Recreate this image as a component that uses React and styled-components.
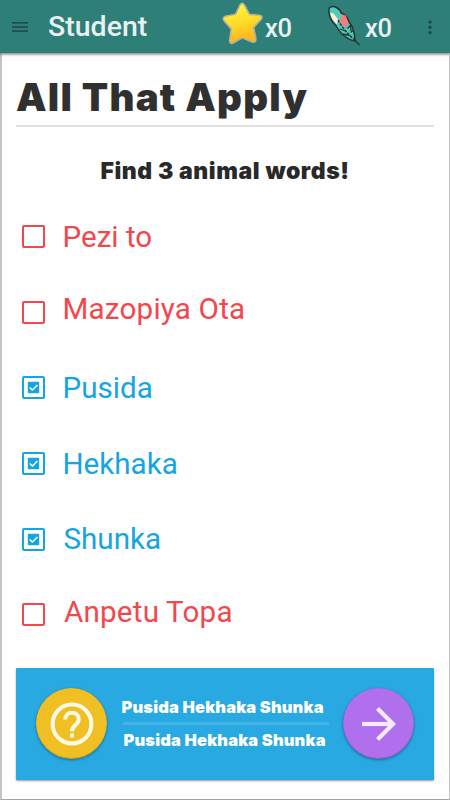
import React, { useState } from "react";
import styled, { createGlobalStyle } from "styled-components";

const GlobalStyle = createGlobalStyle`
    * {
        box-sizing: border-box;
    }
    body {
        margin: 0;
        background: #fefefe;
    }
`;

const Screen = styled.div`
    width: 450px;
    height: 800px;
    display: flex;
    flex-direction: column;
    overflow: hidden;
    font-family: Roboto, sans-serif;
`;

const Header = styled.header`
    height: 53px;
    flex: none;
    display: flex;
    align-items: center;
    background: #2f7f79;
    box-shadow: 0 1px 3px rgba(0, 0, 0, 0.6);
    z-index: 1;
`;

const HeaderTitle = styled.div`
    width: 174px;
    margin-left: 20px;
    padding-top: 1px;
    font-size: 28.5px;
    font-weight: 500;
    line-height: 34px;
    color: #e8f1f1;
`;

const Count = styled.span`
    width: ${(props) => props.$width};
    padding-top: 2px;
    font-size: 25.5px;
    font-weight: 500;
    line-height: 30px;
    letter-spacing: -0.4px;
    color: #e8f1f1;
`;

const MenuIcon = styled.svg`
    margin-left: 12px;
    flex: none;
`;

const HeaderIcon = styled.svg`
    flex: none;
    margin-top: ${(props) => props.$top};
    margin-right: ${(props) => props.$gap};
`;

const Content = styled.main`
    flex: 1;
    display: flex;
    flex-direction: column;
    padding: 20px 15px 19px 14px;
    border: solid #c4c4c4;
    border-width: 0 1px 1px 2px;
    border-bottom-color: #a4a4a4;
`;

const Title = styled.h1`
    height: 54px;
    margin: 0;
    font-family: Inter, sans-serif;
    font-size: 38.5px;
    font-weight: 900;
    line-height: 49px;
    letter-spacing: 1.2px;
    white-space: nowrap;
    color: #303030;
    border-bottom: 2px solid #e2e2e2;
`;

const Question = styled.h2`
    margin: 29px 0 0;
    height: 31px;
    font-family: Inter, sans-serif;
    font-size: 23px;
    font-weight: 900;
    line-height: 30px;
    letter-spacing: 0.58px;
    text-align: center;
    white-space: nowrap;
    color: #292929;
`;

const List = styled.div`
    display: flex;
    flex-direction: column;
    margin-top: 12px;
`;

const Row = styled.div`
    height: 75.6px;
    display: flex;
    align-items: center;
    color: ${(props) => (props.$checked ? "#16a5df" : "#f0484c")};
    cursor: pointer;
`;

const Box = styled.span`
    width: 23px;
    height: 23px;
    margin-left: 6px;
    flex: none;
    display: flex;
    align-items: center;
    justify-content: center;
    border: 2px solid currentColor;
    border-radius: 2px;
`;

const Word = styled.span`
    margin-left: ${(props) => props.$indent || "17.5px"};
    padding-bottom: ${(props) => (props.$raised ? "6px" : "0")};
    font-size: 29.6px;
    line-height: 36px;
    letter-spacing: ${(props) => (props.$raised ? "0.2px" : "0")};
`;

const AnswerBar = styled.footer`
    height: 112px;
    flex: none;
    display: flex;
    align-items: center;
    justify-content: space-between;
    margin-top: auto;
    padding: 0 20px 1px;
    background: #29a9e2;
    border-radius: 1px;
    box-shadow: 0 1px 2px rgba(0, 0, 0, 0.4);
`;

const RoundButton = styled.button`
    width: 71px;
    height: 71px;
    padding: 0;
    flex: none;
    display: flex;
    align-items: center;
    justify-content: center;
    border: none;
    border-radius: 50%;
    background: ${(props) => props.$color};
    box-shadow: 0 1px 3px rgba(0, 40, 70, 0.5), inset 0 -1px 1px rgba(0, 0, 0, 0.15);
`;

const Answers = styled.div`
    width: 207px;
    font-family: Inter, sans-serif;
    font-size: 16.5px;
    font-weight: 900;
    line-height: 22px;
    letter-spacing: 0.15px;
    white-space: nowrap;
    color: #fff;
`;

const Answer = styled.div`
    padding-left: ${(props) => props.$indent || "0"};
`;

const Divider = styled.div`
    height: 3px;
    margin: 4px 0 4px 1px;
    background: #44b4e7;
`;

const Burger = () => (
    <MenuIcon width="16" height="12" viewBox="0 0 16 12" fill="#1c4c4a">
        <rect y="1" width="16" height="1.6" />
        <rect y="5.2" width="16" height="1.6" />
        <rect y="9.3" width="16" height="1.6" />
    </MenuIcon>
);

const Star = () => (
    <HeaderIcon width="42" height="44" viewBox="0 0 42 44" $gap="1px" $top="-8px">
        <defs>
            <linearGradient id="star" x1="0" y1="0" x2="0.25" y2="1">
                <stop offset="0" stopColor="#ffff35" />
                <stop offset="0.5" stopColor="#ffe02a" />
                <stop offset="1" stopColor="#ffb51b" />
            </linearGradient>
        </defs>
        <path
            d="M18 4 Q20 .8 22.4 4 L27.4 13.4 L37.6 14.2 Q41.6 15 39 18.4 L31.6 26.4 L33.9 37.5 Q34 42 30.3 41 L20.2 36.7 L11.2 42 Q7.4 43.4 7.7 39 L9.2 28 L2.2 20 Q-.2 16.5 3.4 15.3 L13.4 13.3 Z"
            fill="url(#star)"
            stroke="#b6afa3"
            strokeWidth="1.6"
            strokeLinejoin="round"
        />
    </HeaderIcon>
);

const Feather = () => (
    <HeaderIcon width="34" height="42" viewBox="0 0 34 42" $gap="3px" $top="-2px">
        <path
            d="M1.2 3 Q3.5 .9 7 1.8 Q12 4 13.2 8 Q18 9.5 20.5 16 L24.5 22.5 Q27 29 27 36 Q20 34.5 14.5 29.5 Q10 25 8 20.5 Q2.5 15.5 1.4 9.5 Q.5 5.5 1.2 3Z"
            fill="#4fcbb9"
            stroke="#243433"
            strokeWidth="1.5"
            strokeLinejoin="round"
        />
        <path d="M2 7.4 L5.5 8.6 L10.3 14.6 L8.8 19.2 Q3.4 14.8 2 7.4Z" fill="#fff0d2" />
        <path d="M13.5 9.6 L17.6 10.6 L20.6 18.2 L17.2 22.4 L12.3 18Z" fill="#ff7780" />
        <path d="M10 15 Q15 24.5 26 34.5" fill="none" stroke="#243433" strokeWidth="1.5" strokeDasharray="3 1" />
        <path d="M26 34.5 L31.5 40" stroke="#283131" strokeWidth="1.5" />
        <path
            d="M19.5 23.5 L22.5 20.5 L23.3 27 M22.6 27.5 L25.2 25.5 M11.5 24 L17.5 26 M15 29 L21.5 30.5"
            fill="none"
            stroke="#243433"
            strokeWidth="1.3"
        />
    </HeaderIcon>
);

const Dots = () => (
    <svg width="6" height="16" viewBox="0 0 6 16" fill="#1c4c4a">
        <circle cx="3" cy="3.1" r="1.7" />
        <circle cx="3" cy="8.3" r="1.7" />
        <circle cx="3" cy="13.4" r="1.7" />
    </svg>
);

const Check = () => (
    <svg width="13" height="13" viewBox="0 0 13 13">
        <rect x="0.8" y="0.8" width="11.4" height="11.4" rx="1" fill="currentColor" />
        <path d="M2.8 6.4 L5.4 9 L10.5 3.9" fill="none" stroke="#fff" strokeWidth="1.4" />
    </svg>
);

const QuestionIcon = () => (
    <svg width="44" height="44" viewBox="0 0 44 44" fill="none" stroke="#fff9e6" strokeWidth="4">
        <circle cx="22" cy="22" r="19.4" />
        <path d="M15.2 17.6 C15.2 8.4 28.7 8.4 28.7 17.4 C28.7 22.8 22 23.3 22 29.3" />
        <path d="M22 31.4 V35.5" />
    </svg>
);

const ArrowIcon = () => (
    <svg width="36" height="36" viewBox="0 0 36 36" fill="none" stroke="#f5eafd" strokeWidth="4.2">
        <path d="M1 18 H32" />
        <path d="M16.5 2.5 L32 18 L16.5 33.5" />
    </svg>
);

const initialWords = [
    { text: "Pezi to", checked: false },
    { text: "Mazopiya Ota", checked: false, raised: true },
    { text: "Pusida", checked: true },
    { text: "Hekhaka", checked: true },
    { text: "Shunka", checked: true, indent: "18.5px" },
    { text: "Anpetu Topa", checked: false, raised: true, indent: "19px" },
];

function App() {
    const [words, setWords] = useState(initialWords);

    const toggle = (index) => {
        setWords(words.map((word, i) => (i === index ? { ...word, checked: !word.checked } : word)));
    };

    const answer = words.filter((word) => word.checked).map((word) => word.text).join(" ");

    return (
        <>
            <GlobalStyle />
            <Screen>
                <Header>
                    <Burger />
                    <HeaderTitle>Student</HeaderTitle>
                    <Star />
                    <Count $width="63px">x0</Count>
                    <Feather />
                    <Count $width="62px">x0</Count>
                    <Dots />
                </Header>
                <Content>
                    <Title>All That Apply</Title>
                    <Question>Find 3 animal words!</Question>
                    <List>
                        {words.map((word, i) => (
                            <Row key={word.text} $checked={word.checked} onClick={() => toggle(i)}>
                                <Box>{word.checked && <Check />}</Box>
                                <Word $raised={word.raised} $indent={word.indent}>
                                    {word.text}
                                </Word>
                            </Row>
                        ))}
                    </List>
                    <AnswerBar>
                        <RoundButton $color="#f0bf24">
                            <QuestionIcon />
                        </RoundButton>
                        <Answers>
                            <Answer>{answer}</Answer>
                            <Divider />
                            <Answer $indent="2px">{answer}</Answer>
                        </Answers>
                        <RoundButton $color="#b06fec">
                            <ArrowIcon />
                        </RoundButton>
                    </AnswerBar>
                </Content>
            </Screen>
        </>
    );
}

export default App;
